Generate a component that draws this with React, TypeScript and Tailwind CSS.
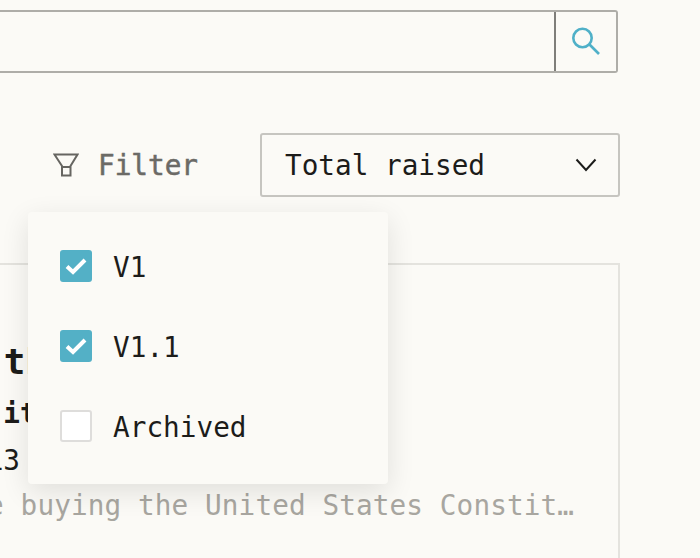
import React from "react";

const MONO = "font-['DejaVu_Sans_Mono',monospace]";

function FilterOption({ label, checked }: { label: string; checked: boolean }) {
  return (
    <div className="flex h-[80px] items-center gap-[21px] pl-[32px]">
      {checked ? (
        <span className="flex h-[32px] w-[32px] items-center justify-center rounded-[3px] bg-[#53b0c6]">
          <svg width="22" height="18" viewBox="0 0 22 18" fill="none">
            <path d="M2 9.5 L8 15 L20 3" stroke="#fff" strokeWidth="4" />
          </svg>
        </span>
      ) : (
        <span className="h-[32px] w-[32px] rounded-[3px] border-2 border-[#dedddb] bg-white" />
      )}
      <span className="pt-[3px] text-[27.7px] leading-none tracking-[0.02px] text-[#1c1c1a]">{label}</span>
    </div>
  );
}

export default function App() {
  return (
    <div className={`relative h-[558px] w-[700px] overflow-hidden bg-[#fbfaf6] ${MONO}`}>
      {/* Search */}
      <div className="pt-[10px]">
        <div className="flex h-[63px] w-[618px] rounded-r-[3px] border-y-2 border-r-2 border-[#aeada8]">
          <div className="flex-1" />
          <button className="flex w-[62px] items-center justify-center border-l-2 border-[#7f7e7a]">
            <svg width="32" height="32" viewBox="0 0 32 32" fill="none" stroke="#4fb0c8" strokeWidth="2.6">
              <circle cx="12.5" cy="12" r="9.2" />
              <path d="M19.5 18.5 L29 28" />
            </svg>
          </button>
        </div>
      </div>

      {/* Filter row */}
      <div className="mt-[60px] flex w-[620px] items-center justify-end">
        <button className="mr-[62px] flex items-center gap-[19px] text-[27.7px] leading-none text-[#6b6a66]">
          <svg width="26" height="24" viewBox="0 0 26 24" fill="none" stroke="#666561" strokeWidth="2">
            <path d="M1.5 1.5 H24.5 L17.5 13 V22.5 H9 V13 Z M9 14 H17.5" />
          </svg>
          <span className="pt-[2px] [-webkit-text-stroke:0.5px_#6b6a66]">Filter</span>
        </button>
        <div className="flex h-[64px] w-[360px] items-center justify-between rounded-[3px] border-2 border-[#c6c5c0] pl-[23px] pr-[21px]">
          <span className="pt-[2px] text-[27.7px] leading-none text-[#1c1c1a]">Total raised</span>
          <svg width="22" height="14" viewBox="0 0 22 14" fill="none" stroke="#1c1c1a" strokeWidth="2">
            <path d="M1.5 1.5 L11 12 L20.5 1.5" />
          </svg>
        </div>
      </div>

      {/* Card, cut off by the window on the left */}
      <div className="ml-[-80px] mt-[66px] h-[320px] w-[700px] border-r-2 border-t-2 border-[#e4e3de] pt-[75px]">
        <div className="ml-[-3px] text-[36px] font-bold leading-[44px] text-[#1c1c1a]">Buy the Constitution</div>
        <div className="mt-[14px] text-[27.7px] font-bold leading-[32px] text-[#1c1c1a]">Fund it</div>
        <div className="mt-[15px] text-[27.7px] leading-[32px] text-[#1c1c1a]">Nov 13</div>
        <div className="mt-[13px] whitespace-nowrap text-[27.7px] leading-[32px] tracking-[0.1px] text-[#a8a6a0]">We're buying the United States Constit…</div>
      </div>

      {/* Filter menu */}
      <div className="absolute left-[28px] top-[212px] h-[272px] w-[360px] rounded-[4px] bg-[#fbfaf6] pt-[14px] shadow-[0_8px_28px_rgba(0,0,0,0.11)]">
        <FilterOption label="V1" checked />
        <FilterOption label="V1.1" checked />
        <FilterOption label="Archived" checked={false} />
      </div>
    </div>
  );
}
